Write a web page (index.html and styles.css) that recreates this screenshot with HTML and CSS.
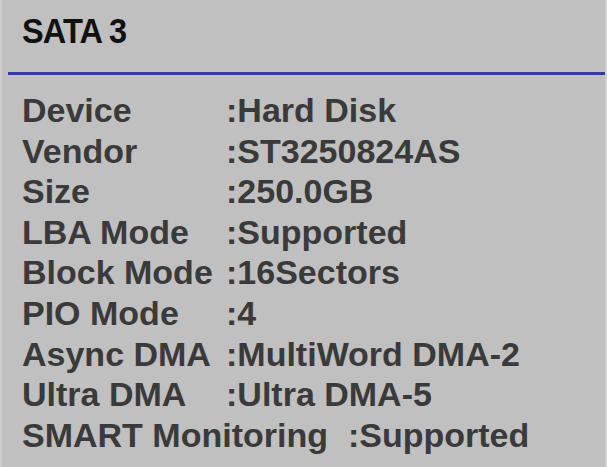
FILE: index.html
```html
<!DOCTYPE html>
<html lang="en">
<head>
  <meta charset="UTF-8">
  <title>SATA 3</title>
  <link rel="stylesheet" href="styles.css">
</head>
<body>
  <div class="panel">
    <div class="panel__head">
      <h1 class="panel__title">SATA 3</h1>
    </div>

    <div class="info">
      <div class="info__row"><span class="info__label">Device</span><span class="info__value">:Hard Disk</span></div>
      <div class="info__row"><span class="info__label">Vendor</span><span class="info__value">:ST3250824AS</span></div>
      <div class="info__row"><span class="info__label">Size</span><span class="info__value">:250.0GB</span></div>
      <div class="info__row"><span class="info__label">LBA Mode</span><span class="info__value">:Supported</span></div>
      <div class="info__row"><span class="info__label">Block Mode</span><span class="info__value">:16Sectors</span></div>
      <div class="info__row"><span class="info__label">PIO Mode</span><span class="info__value">:4</span></div>
      <div class="info__row"><span class="info__label">Async DMA</span><span class="info__value">:MultiWord DMA-2</span></div>
      <div class="info__row"><span class="info__label">Ultra DMA</span><span class="info__value">:Ultra DMA-5</span></div>
      <div class="info__row"><span class="info__label info__label--wide">SMART Monitoring</span><span class="info__value">:Supported</span></div>
    </div>
  </div>
</body>
</html>
```

FILE: styles.css
```css
body, html {
  margin: 0;
  height: 100%;
  overflow: hidden;
}

body {
  background: #c0c0c0;
  font-family: "Liberation Sans", Arial, sans-serif;
}

.panel {
  height: 100%;
  border-left: 2px solid #cdcdcd;
  border-right: 2px solid #d2d2d2;
  box-sizing: border-box;
}

.panel__head {
  margin-left: 6px;
  padding: 11px 0 21px 14px;
  border-bottom: 3px solid #3a3a9c;
}

/* title face is a touch narrower than the rows */
.panel__title {
  display: inline-block;
  margin: 0;
  font-size: 35px;
  line-height: 40px;
  font-weight: bold;
  color: #111;
  letter-spacing: -1px;
  transform: scaleX(0.93);
  transform-origin: left center;
}

.info {
  padding: 15px 0 0 20px;
  font-size: 34px;
  line-height: 40.6px;
  font-weight: bold;
  color: #3a3a3a;
}

.info__row {
  display: flex;
  white-space: nowrap;
}

.info__label {
  min-width: 204px;
  padding-right: 10px;
  box-sizing: border-box;
}

/* last label runs past the column, so it keeps a wider gap */
.info__label--wide {
  padding-right: 20px;
}
```
